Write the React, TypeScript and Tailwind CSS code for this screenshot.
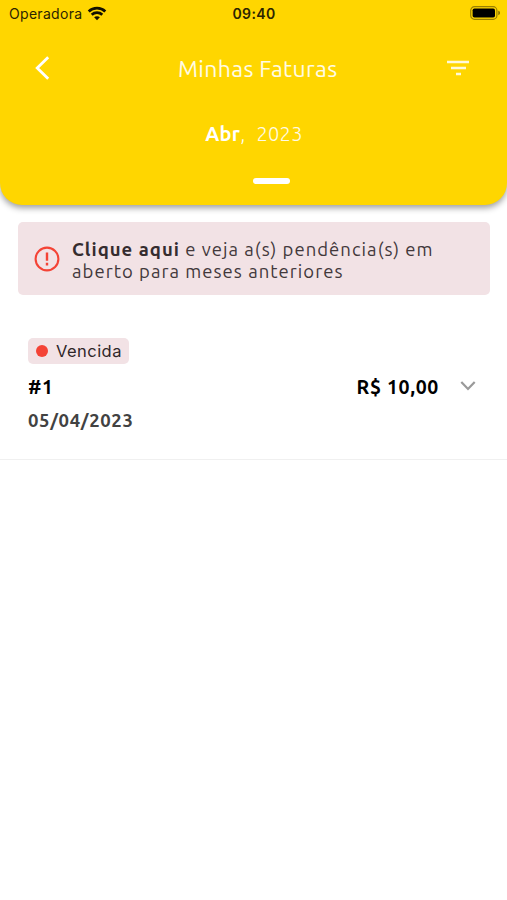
const ubuntu = "font-['Ubuntu','Noto_Sans',sans-serif]";

function WifiIcon() {
  return (
    <svg width="20" height="15" viewBox="0 0 20 15" fill="none" stroke="#141000" strokeWidth="2.7">
      <path d="M1.7 5.5C6.3 1 13.7 1 18.3 5.5" />
      <path d="M4.7 8.8C7.7 6 12.3 6 15.3 8.8" />
      <path d="M10 14.2 7.1 11.3C8.7 9.8 11.3 9.8 12.9 11.3Z" fill="#141000" stroke="none" />
    </svg>
  );
}

function BatteryIcon() {
  return (
    <svg width="31" height="14" viewBox="0 0 31 14">
      <rect x="0.7" y="0.7" width="26.2" height="12.6" rx="3.8" fill="none" stroke="#000" strokeOpacity="0.4" strokeWidth="1.2" />
      <rect x="2.6" y="2.4" width="22.4" height="9.2" rx="1.8" fill="#000" />
      <path d="M28.3 4.8C30.5 5.4 30.5 8.6 28.3 9.2Z" fill="#000" fillOpacity="0.5" />
    </svg>
  );
}

function StatusBar() {
  return (
    <div className="grid h-[26px] grid-cols-3 items-center pl-[9px] pr-[6px] font-['Inter',sans-serif] text-[#2b2400]">
      <div className="flex items-center gap-[5px]">
        <span className="pt-[2px] text-[14px] leading-[20px] tracking-[0.3px]">Operadora</span>
        <WifiIcon />
      </div>
      <span className="-ml-[2px] pt-[2px] text-center text-[14px] font-semibold leading-[20px] tracking-[0.35px]">09:40</span>
      <div className="flex justify-end">
        <BatteryIcon />
      </div>
    </div>
  );
}

function Header() {
  return (
    <header className="h-[205px] rounded-b-[22px] bg-[#ffd600] text-white shadow-[0_3px_6px_rgba(0,0,0,0.38)]">
      <StatusBar />
      <div className="flex h-[84px] items-center pl-[35px] pr-[37px]">
        <svg width="16" height="26" viewBox="0 0 16 26" fill="none" stroke="#fff" strokeWidth="2.8">
          <path d="M13.2 2.2 2.2 13l11 10.8" />
        </svg>
        <h1 className={`${ubuntu} ml-[127px] whitespace-nowrap pt-[2px] text-[23px] font-normal leading-[30px] tracking-[0.35px] text-white/90`}>Minhas Faturas</h1>
        <svg className="ml-auto" width="24" height="18" viewBox="0 0 24 18" fill="none" stroke="#fff" strokeOpacity="0.85" strokeWidth="2.7">
          <path d="M1 3h22M5 9h15M10 15h5" />
        </svg>
      </div>
      <div className={`${ubuntu} flex h-[48px] items-center justify-center pl-px text-[20px] leading-[28px] tracking-[0.3px]`}>
        <span className="font-bold">Abr</span>
        <span className="font-light">,</span>
        <span className="ml-[11px] font-light text-white/90">2023</span>
      </div>
      <div className="ml-[253px] mt-[20px] h-[6px] w-[37px] rounded-full bg-white" />
    </header>
  );
}

function Notice() {
  return (
    <div className="ml-[18px] mr-[17px] mt-[17px] flex h-[73px] items-center rounded-[5px] bg-[#f2e2e5] pl-[16px]">
      <svg width="26" height="26" viewBox="0 0 26 26" fill="none" stroke="#f44336">
        <circle cx="13" cy="13" r="11.4" strokeWidth="2.1" />
        <path d="M13 6.6v8.2M13 16.8v2.6" strokeWidth="2.4" />
      </svg>
      <p className={`${ubuntu} ml-[12px] whitespace-nowrap pt-[2px] text-[18.5px] leading-[22px] tracking-[1.03px] text-[#42383b]`}>
        <span className="block">
          <b className="font-bold text-[#352c2f]">Clique aqui</b> e veja a(s) pendência(s) em
        </span>
        <span className="block">aberto para meses anteriores</span>
      </p>
    </div>
  );
}

function Invoice() {
  return (
    <section className="mt-[43px] h-[122px] border-b border-[#f0f0f0] pl-[28px] pr-[31px]">
      <div className="flex h-[26px] w-[101px] items-center rounded-[5px] bg-[#f2e2e5] pl-[8px]">
        <span className="size-[12px] rounded-full bg-[#f44336]" />
        <span className="ml-[8px] font-['Inter',sans-serif] text-[16.5px] leading-[24px] tracking-[0.45px] text-[#2f2629]">Vencida</span>
      </div>
      <div className={`${ubuntu} flex h-[46px] items-center text-[19.5px] font-bold tracking-[0.65px] text-black`}>
        <span className="pt-[2px]">#1</span>
        <span className="ml-auto pt-[2px]">R$ 10,00</span>
        <svg className="-mt-[2px] ml-[21px]" width="16" height="12" viewBox="0 0 16 12" fill="none" stroke="#9a9a9a" strokeWidth="2.2">
          <path d="M1.3 2 8 9l6.7-7" />
        </svg>
      </div>
      <div className={`${ubuntu} -mt-[2px] text-[18.5px] font-bold leading-[24px] tracking-[0.65px] text-[#424242]`}>05/04/2023</div>
    </section>
  );
}

export default function App() {
  return (
    <main className="h-[900px] w-full overflow-hidden bg-white">
      <Header />
      <Notice />
      <Invoice />
    </main>
  );
}
